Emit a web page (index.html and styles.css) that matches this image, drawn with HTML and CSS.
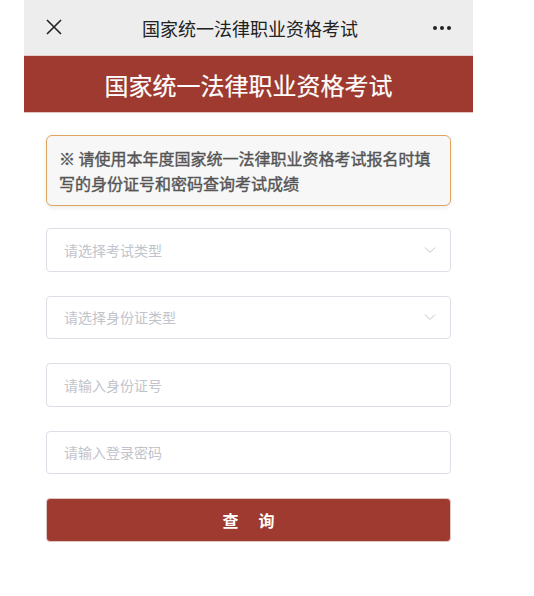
FILE: index.html
```html
<!DOCTYPE html>
<html lang="zh-CN">
<head>
    <meta charset="UTF-8">
    <meta name="viewport" content="width=device-width, initial-scale=1.0">
    <title>国家统一法律职业资格考试</title>
    <link rel="stylesheet" href="styles.css">
</head>
<body>
    <div class="phone">
        <header class="nav-bar">
            <span class="nav-close">
                <svg width="18" height="18" viewBox="0 0 18 18"><path d="M2 2L16 16M16 2L2 16" stroke="#222" stroke-width="1.6" fill="none"/></svg>
            </span>
            <span class="nav-title">国家统一法律职业资格考试</span>
            <span class="nav-more"><i></i><i></i><i></i></span>
        </header>

        <div class="banner">国家统一法律职业资格考试</div>

        <main class="form">
            <div class="notice">※ 请使用本年度国家统一法律职业资格考试报名时填写的身份证号和密码查询考试成绩</div>

            <div class="field select">
                <span class="placeholder">请选择考试类型</span>
                <svg class="arrow" width="12" height="8" viewBox="0 0 12 8"><path d="M1 1.5L6 6.5L11 1.5" stroke="#c0c4cc" stroke-width="1" fill="none"/></svg>
            </div>
            <div class="field select">
                <span class="placeholder">请选择身份证类型</span>
                <svg class="arrow" width="12" height="8" viewBox="0 0 12 8"><path d="M1 1.5L6 6.5L11 1.5" stroke="#c0c4cc" stroke-width="1" fill="none"/></svg>
            </div>
            <div class="field">
                <span class="placeholder">请输入身份证号</span>
            </div>
            <div class="field">
                <span class="placeholder">请输入登录密码</span>
            </div>

            <button class="submit-btn">查询</button>
        </main>
    </div>
</body>
</html>
```

FILE: styles.css
```css
/* page */
body {
    margin: 0;
    padding: 0;
    background: #fff;
    font-family: "Noto Sans CJK SC", "Noto Sans", sans-serif;
    color: #222;
}

.phone {
    width: 449px;
    margin-left: 24px;
    min-height: 596px;
    background: #fff;
}

/* top bar */
.nav-bar {
    height: 56px;
    background: #ededed;
    border-bottom: 1px solid #e2cfcb;
    display: flex;
    align-items: center;
    justify-content: space-between;
    padding: 0 22px 0 21px;
    box-sizing: border-box;
}

.nav-close {
    display: flex;
    width: 18px;
    height: 18px;
    margin-top: -1px;
}

.nav-title {
    font-size: 18px;
    font-weight: 400;
    color: #222;
    margin-left: 4px;
}

.nav-more {
    display: flex;
    gap: 3px;
    width: 18px;
}

.nav-more i {
    display: block;
    width: 4px;
    height: 4px;
    border-radius: 50%;
    background: #222;
}

/* red banner */
.banner {
    height: 56px;
    background: #9e3a2f;
    border-bottom: 1px solid #e3c4bf;
    color: #fff;
    font-size: 24px;
    font-weight: 400;
    -webkit-text-stroke: 0.2px #fff;
    display: flex;
    align-items: center;
    justify-content: center;
}

/* form */
.form {
    padding: 22px 22px 0;
    display: flex;
    flex-direction: column;
    gap: 24px;
}

.notice {
    border: 1px solid #e0a461;
    border-radius: 6px;
    background: #f7f7f7;
    box-shadow: 0 2px 4px rgba(0, 0, 0, 0.08);
    padding: 9.5px 12px;
    font-size: 16px;
    line-height: 25px;
    font-weight: 400;
    -webkit-text-stroke: 0.4px #555;
    color: #555;
    margin-bottom: -2px;
}

.field {
    height: 43.5px;
    box-sizing: border-box;
    border: 1px solid #dcdfe6;
    border-radius: 4px;
    display: flex;
    align-items: center;
    justify-content: space-between;
    padding: 0 14px 0 17px;
}

.placeholder {
    font-size: 14px;
    color: #c0c4cc;
}

.submit-btn {
    height: 43.5px;
    border: 1px solid #e0c8c4;
    border-radius: 4px;
    background: #9e3a2f;
    color: #fff;
    font-family: inherit;
    font-size: 16px;
    font-weight: 700;
    letter-spacing: 20px;
    text-indent: 20px;
    cursor: pointer;
}
```
